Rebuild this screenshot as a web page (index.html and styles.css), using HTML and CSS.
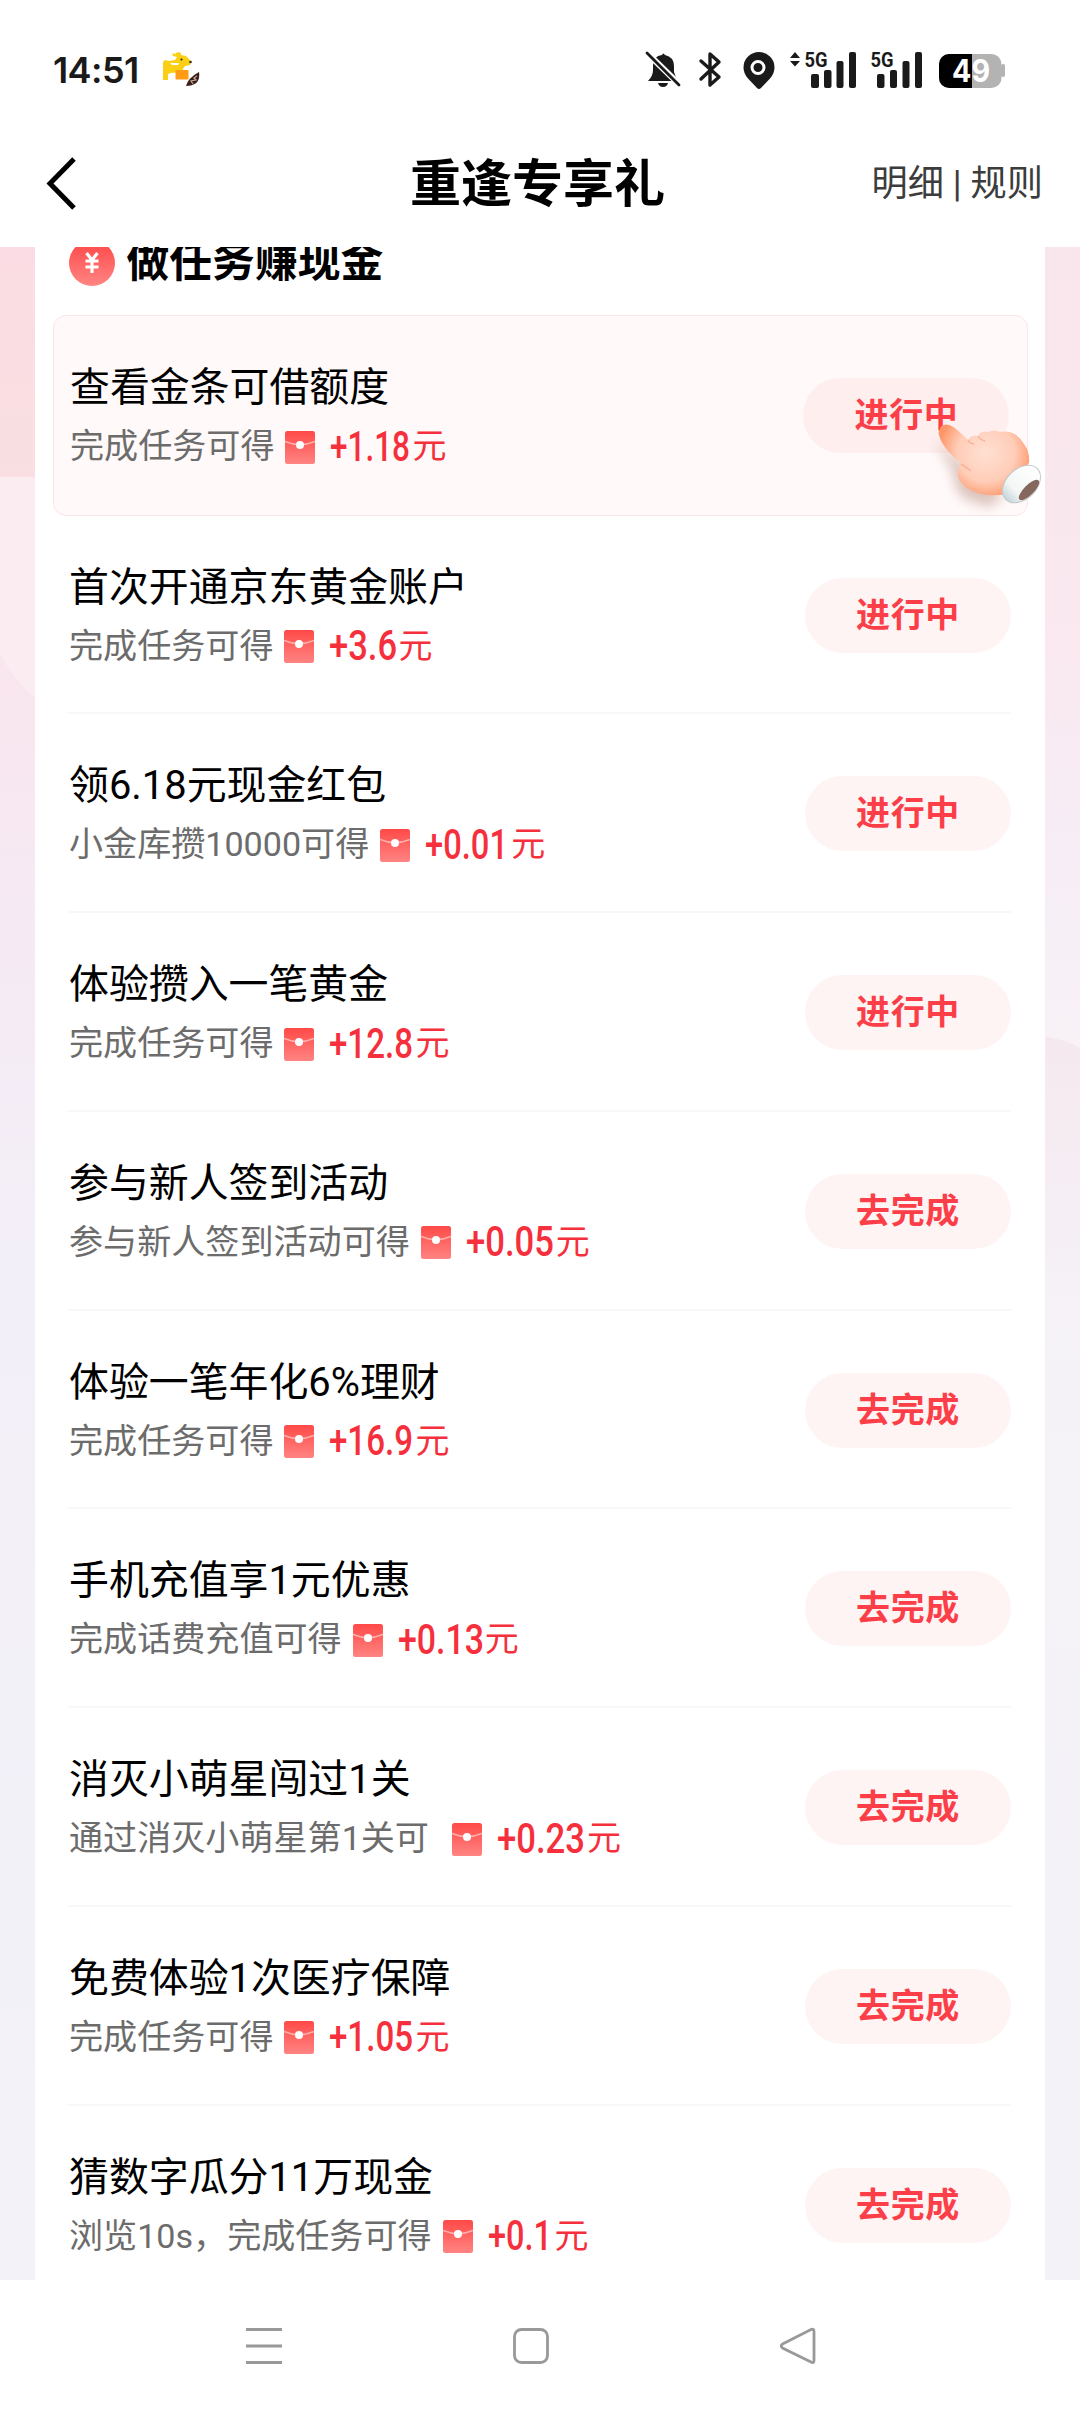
FILE: index.html
```html
<!DOCTYPE html>
<html lang="zh-CN">
<head>
<meta charset="utf-8">
<title>重逢专享礼</title>
<link rel="stylesheet" href="styles.css">
</head>
<body>
<svg width="0" height="0" class="defs" aria-hidden="true">
  <defs>
    <linearGradient id="envFill" x1="0" y1="0" x2="0" y2="1"><stop offset="0" stop-color="#ff4a48"/><stop offset="1" stop-color="#ff8482"/></linearGradient>
    <symbol id="envelope" viewBox="0 0 30 33">
      <rect x="0" y="0" width="30" height="33" rx="2.5" fill="url(#envFill)"/>
      <path d="M0 10.5 Q15 17 30 10.5" fill="none" stroke="#ffb0ac" stroke-width="1.6"/>
      <circle cx="15" cy="14" r="4" fill="#fff"/>
    </symbol>
  </defs>
</svg>
<div class="screen">
  <header class="status">
    <div class="status-left">
      <span class="clock">14:51</span>
      <svg width="40" height="40" viewBox="0 0 40 40">
        <path d="M3 12 L5 10 9 11 15 10 17 7 13 6 12 3 15 4 18 2 21 3 21 5 26 6 31 11 30 15 25 16 23 19 22 22 11 23 8 24 8 30 3 30Z" fill="#fbd014"/>
        <path d="M10 13 L19 13 18 15 12 15Z" fill="#fff"/>
        <rect x="15.500" y="20" width="13" height="9.500" rx="1" fill="#ff9b14"/>
        <circle cx="21.500" cy="9.500" r="1.100" fill="#3a2a10"/><circle cx="30.500" cy="12" r="1.300" fill="#3a2a10"/>
        <path d="M39 22 Q41 36 26 36 Q28 28 39 22Z" fill="#3a2019"/>
        <path d="M37 26 L34 28 36 30 31 31 33 34" fill="none" stroke="#c9a99b" stroke-width="1.200"/>
      </svg>
    </div>
    <svg class="status-right" width="390" height="44" viewBox="640 48 390 44">
      <g fill="#1a1a1a">
        <path d="M648 81 q5-5 5-11 v-4 q0-10 9-11 q1-3 3 0 q9 2 9 11 v6 q1 5 5 9z"/>
        <path d="M658 83 h10 q-1 4-5 4 t-5-4z"/>
        <path d="M646 52 L681 86" stroke="#fff" stroke-width="6"/>
        <path d="M647 53 L679 85" stroke="#1a1a1a" stroke-width="2.800" stroke-linecap="round"/>
        <path d="M701 61 L719 77 710 85 V54 L719 62 701 79" fill="none" stroke="#1a1a1a" stroke-width="3.400" stroke-linejoin="round" stroke-linecap="round"/>
        <path d="M759 52 a15.500 15.500 0 0 1 15.500 15.500 q0 6-4.500 11 l-9 9.500 q-2 2-4 0 l-9-9.500 q-4.500-5-4.500-11 a15.500 15.500 0 0 1 15.500-15.500z"/>
        <circle cx="758" cy="67.500" r="6" stroke="#fff" stroke-width="3"/>
        <path d="M790 58 L795 52 800 58z M790 61 L795 66.500 800 61z"/>
        <rect x="811" y="74" width="8" height="14" rx="2"/><rect x="824" y="70" width="7.500" height="18" rx="2"/><rect x="836.500" y="61" width="7" height="27" rx="2"/><rect x="849" y="52" width="7" height="36" rx="2"/>
        <rect x="877" y="74" width="7.500" height="14" rx="2"/><rect x="890" y="70" width="7" height="18" rx="2"/><rect x="902.500" y="61" width="7" height="27" rx="2"/><rect x="915" y="52" width="7" height="36" rx="2"/>
        <text class="net" x="804.500" y="66.500" textLength="23" lengthAdjust="spacingAndGlyphs">5G</text>
        <text class="net" x="870.500" y="66.500" textLength="23" lengthAdjust="spacingAndGlyphs">5G</text>
      </g>
      <rect x="939" y="54" width="62.500" height="34" rx="10" fill="#b3b3b3"/><rect x="1001" y="64" width="4" height="13" rx="2" fill="#b3b3b3"/>
      <path d="M972 54 H949 a10 10 0 0 0 -10 10 v14 a10 10 0 0 0 10 10 H972z" fill="#000"/>
      <text class="batt" x="952" y="82" textLength="38" lengthAdjust="spacingAndGlyphs">49</text>
    </svg>
  </header>
  <nav class="topbar">
    <svg class="back" width="34" height="56" viewBox="0 0 34 56"><path d="M30 3 L6 27.500 30 52" fill="none" stroke="#000" stroke-width="5"/></svg>
    <h1 class="title">重逢专享礼</h1>
    <span class="links">明细 | 规则</span>
  </nav>
  <main class="page">
    <svg class="backdrop" width="1080" height="2033" viewBox="0 247 1080 2033">
      <defs>
        <linearGradient id="sideL" gradientUnits="userSpaceOnUse" x1="0" y1="247" x2="0" y2="2280"><stop offset="0" stop-color="#fadde5"/><stop offset=".12" stop-color="#f8e3ea"/><stop offset=".24" stop-color="#f9e7f0"/><stop offset=".34" stop-color="#f5eaf4"/><stop offset=".5" stop-color="#f3eff8"/><stop offset="1" stop-color="#f2f2f8"/></linearGradient>
        <linearGradient id="sideR" gradientUnits="userSpaceOnUse" x1="0" y1="247" x2="0" y2="2280"><stop offset="0" stop-color="#f9e5ec"/><stop offset=".2" stop-color="#fae9f0"/><stop offset=".3" stop-color="#f6edf6"/><stop offset=".39" stop-color="#f8f1f6"/><stop offset=".55" stop-color="#f5f2f7"/><stop offset="1" stop-color="#f2f2f8"/></linearGradient>
        <linearGradient id="fadeR" x1="0" y1="0" x2="0" y2="1"><stop offset="0" stop-color="#f5e9ef"/><stop offset="1" stop-color="#f5f1f7"/></linearGradient>
        <linearGradient id="topL" x1="0" y1="0" x2="0" y2="1"><stop offset="0" stop-color="#fbdce4"/><stop offset="1" stop-color="#f9dfe1"/></linearGradient>
      </defs>
      <rect x="0" y="247" width="540" height="2033" fill="url(#sideL)"/>
      <rect x="540" y="247" width="540" height="2033" fill="url(#sideR)"/>
      <rect x="0" y="247" width="36" height="230" fill="url(#topL)"/>
      <path d="M0 477 H36 V699 Q16 683 0 655z" fill="#fbecf2"/>
      <path d="M1040 1036 Q1062 1038 1080 1048 V1300 H1040z" fill="url(#fadeR)"/>
    </svg>
    <section class="card">
      <h2 class="card-title">
        <svg width="46" height="46" viewBox="0 0 46 46"><defs><linearGradient id="coin" x1="0" y1="0" x2="0" y2="1"><stop offset="0" stop-color="#fd4747"/><stop offset="1" stop-color="#ff8583"/></linearGradient></defs><circle cx="23" cy="23" r="23" fill="url(#coin)"/><path d="M17.500 13 L23 20 28.500 13 M16.500 21 H29.500 M16.500 27 H29.500 M23 20 V33" fill="none" stroke="#fff" stroke-width="3.200"/></svg>
        <span>做任务赚现金</span>
      </h2>
      <ul class="tasks">
        <li class="task active">
          <div class="info"><p class="name">查看金条可借额度</p><p class="desc">完成任务可得<svg class="env"><use href="#envelope"/></svg><svg class="amount" width="82"><text x="0" y="35" textLength="80" lengthAdjust="spacingAndGlyphs">+1.18</text></svg><span class="yuan">元</span></p></div>
          <button class="go">进行中</button>
          <svg class="hand" width="150" height="130" viewBox="-10 0 150 130">
            <defs>
              <radialGradient id="skin" gradientUnits="userSpaceOnUse" cx="66" cy="43" r="48"><stop offset="0" stop-color="#ffe0d3"/><stop offset=".6" stop-color="#ffcdb8"/><stop offset="1" stop-color="#fd9566"/></radialGradient>
              <linearGradient id="cuff" x1="0" y1="0" x2="1" y2="0"><stop offset="0" stop-color="#c4d5dc"/><stop offset=".3" stop-color="#f4f6f6"/><stop offset="1" stop-color="#fff"/></linearGradient>
              <filter id="soft" x="-30%" y="-30%" width="160%" height="160%"><feGaussianBlur stdDeviation="6"/></filter>
            </defs>
            <path d="M20 24 L38 57 Q38 74 50 82 L72 90 88 80 Z" fill="#8c4a30" opacity=".3" filter="url(#soft)" transform="translate(-4 7)"/>
            <path d="M19 21 Q21 13 29 15 Q34 16 48 30 Q51 25 58 26 Q61 20 68 22 Q74 19 80 22 Q95 19 104 34 Q110 42 109 53 L86 84 Q77 86 67 85 Q46 82 39 69 Q36 61 41 54 Q23 38 20 28 Q18 24 19 21Z" fill="url(#skin)"/>
            <path d="M48 30 Q49 33 54 34 M58 26 Q60 30 65 31" fill="none" stroke="#f7a184" stroke-width="1.300" opacity=".7"/>
            <path d="M41 54 Q46 57 51 61" fill="none" stroke="#f8a788" stroke-width="1.600" opacity=".7"/>
            <ellipse cx="101.500" cy="74" rx="22" ry="15" transform="rotate(-44 101.500 74)" fill="url(#cuff)" stroke="#c2c9cc" stroke-width="1"/>
            <ellipse cx="109" cy="80" rx="13.500" ry="5" transform="rotate(-45 109 80)" fill="#86675d"/>
          </svg>
        </li>
        <li class="task"><div class="info"><p class="name">首次开通京东黄金账户</p><p class="desc">完成任务可得<svg class="env"><use href="#envelope"/></svg><svg class="amount" width="69"><text x="0" y="35" textLength="68" lengthAdjust="spacingAndGlyphs">+3.6</text></svg><span class="yuan">元</span></p></div><button class="go">进行中</button></li>
        <li class="task"><div class="info"><p class="name">领6.18元现金红包</p><p class="desc">小金库攒10000可得<svg class="env"><use href="#envelope"/></svg><svg class="amount" width="86"><text x="0" y="35" textLength="83" lengthAdjust="spacingAndGlyphs">+0.01</text></svg><span class="yuan">元</span></p></div><button class="go">进行中</button></li>
        <li class="task"><div class="info"><p class="name">体验攒入一笔黄金</p><p class="desc">完成任务可得<svg class="env"><use href="#envelope"/></svg><svg class="amount" width="86"><text x="0" y="35" textLength="84" lengthAdjust="spacingAndGlyphs">+12.8</text></svg><span class="yuan">元</span></p></div><button class="go">进行中</button></li>
        <li class="task"><div class="info"><p class="name">参与新人签到活动</p><p class="desc">参与新人签到活动可得<svg class="env"><use href="#envelope"/></svg><svg class="amount" width="90"><text x="0" y="35" textLength="88" lengthAdjust="spacingAndGlyphs">+0.05</text></svg><span class="yuan">元</span></p></div><button class="go">去完成</button></li>
        <li class="task"><div class="info"><p class="name">体验一笔年化6%理财</p><p class="desc">完成任务可得<svg class="env"><use href="#envelope"/></svg><svg class="amount" width="86"><text x="0" y="35" textLength="84" lengthAdjust="spacingAndGlyphs">+16.9</text></svg><span class="yuan">元</span></p></div><button class="go">去完成</button></li>
        <li class="task"><div class="info"><p class="name">手机充值享1元优惠</p><p class="desc">完成话费充值可得<svg class="env"><use href="#envelope"/></svg><svg class="amount" width="87"><text x="0" y="35" textLength="86" lengthAdjust="spacingAndGlyphs">+0.13</text></svg><span class="yuan">元</span></p></div><button class="go">去完成</button></li>
        <li class="task"><div class="info"><p class="name">消灭小萌星闯过1关</p><p class="desc"><span class="clip">通过消灭小萌星第1关可</span><svg class="env"><use href="#envelope"/></svg><svg class="amount" width="90"><text x="0" y="35" textLength="88" lengthAdjust="spacingAndGlyphs">+0.23</text></svg><span class="yuan">元</span></p></div><button class="go">去完成</button></li>
        <li class="task"><div class="info"><p class="name">免费体验1次医疗保障</p><p class="desc">完成任务可得<svg class="env"><use href="#envelope"/></svg><svg class="amount" width="86"><text x="0" y="35" textLength="84" lengthAdjust="spacingAndGlyphs">+1.05</text></svg><span class="yuan">元</span></p></div><button class="go">去完成</button></li>
        <li class="task"><div class="info"><p class="name">猜数字瓜分11万现金</p><p class="desc">浏览10s，完成任务可得<svg class="env"><use href="#envelope"/></svg><svg class="amount" width="67"><text x="0" y="35" textLength="64" lengthAdjust="spacingAndGlyphs">+0.1</text></svg><span class="yuan">元</span></p></div><button class="go">去完成</button></li>
      </ul>
    </section>
  </main>
  <footer class="sysnav">
    <svg width="36" height="38" viewBox="0 0 36 38"><path d="M0 2.500 H36 M0 19 H36 M0 35.500 H36"/></svg>
    <svg width="36" height="38" viewBox="0 0 36 38"><rect x="1.500" y="2.500" width="33" height="33" rx="7"/></svg>
    <svg width="36" height="38" viewBox="0 0 36 38"><path d="M2.500 17 L31 2.500 Q34 1.500 34 4.500 V33.500 Q34 36.500 31 35 L2.500 21 Q0 19 2.500 17z"/></svg>
  </footer>
</div>
</body>
</html>
```
FILE: styles.css
```css
* { box-sizing: border-box; margin: 0; padding: 0; }
body { background: #fff; font-family: Roboto, "Noto Sans CJK SC", sans-serif; }
.defs { position: absolute; }
.screen { width: 1080px; height: 2412px; display: flex; flex-direction: column; overflow: hidden; background: #fff; }
.status { height: 140px; display: flex; justify-content: space-between; align-items: center; padding: 0 50px 0 53px; }
.status-left { display: flex; align-items: center; gap: 21px; }
.clock { font: 600 36px/44px Inter, sans-serif; color: #1a1a1a; letter-spacing: -0.6px; width: 86px; white-space: nowrap; }
.net { font: 700 20.5px Roboto, sans-serif; }
.batt { font: 700 31px Inter, sans-serif; fill: #fff; }
.topbar { height: 107px; display: grid; grid-template-columns: 340px 1fr 340px; align-items: center; padding: 0 37px 20px 44px; }
.title { margin: 2px 8px 0 -4px; font-size: 51px; line-height: 80px; font-weight: 700; text-align: center; color: #000; white-space: nowrap; }
.back { display: block; }
.links { justify-self: end; font-size: 36.200px; line-height: 60px; color: #3c3c3c; white-space: nowrap; }
.page { position: relative; height: 2033px; overflow: hidden; padding: 0 35px; }
.backdrop { position: absolute; left: 0; top: 0; }
.card { position: relative; height: 2033px; background: #fff; padding: 0 17.500px; }
.card-title { height: 68px; display: flex; align-items: flex-start; gap: 12px; padding: 0 16px; font-size: 42.800px; line-height: 60px; font-weight: 700; white-space: nowrap; }
.card-title svg { margin-top: -7px; flex: none; }
.card-title span { margin-top: -15px; }
.tasks { list-style: none; }
.task { position: relative; height: 198.750px; display: flex; justify-content: space-between; align-items: flex-start; margin: 0 17px 0 15.500px; padding: 43px 0 0 1px; border-bottom: 2px solid #f8f8f8; }
.task.active { height: 200.500px; margin: 0; padding: 43px 17.500px 0 16.500px; border: 1.500px solid #f9e6e9; border-radius: 13px; background: #fff9f9; }
.name { font-size: 39.900px; line-height: 58px; color: #000; white-space: nowrap; }
.desc { display: flex; align-items: center; font-size: 34.100px; line-height: 59px; color: #6c6c6c; white-space: nowrap; }
.clip { width: 372px; }
.env { width: 30px; height: 33px; margin: 1px 15px 0 11px; flex: none; }
.amount { height: 42px; flex: none; overflow: visible; }
.amount text { font: 500 42px Roboto, sans-serif; fill: #f5303c; }
.yuan { color: #f5303c; font-size: 34px; }
.go { width: 206px; height: 75px; margin-top: 19px; border: 0; border-radius: 37.500px; background: #fff4f4; color: #fb3e48; font: 700 34px/62px "Noto Sans CJK SC", sans-serif; padding: 0 0 5px 1px; letter-spacing: .6px; }
.active .go { background: #feeeee; }
.hand { position: absolute; left: 856px; top: 94px; }
.sysnav { height: 132px; display: flex; align-items: flex-start; gap: 231px; padding: 47px 0 0 246px; }
.sysnav svg { fill: none; stroke: #999; stroke-width: 2.800; }
```
